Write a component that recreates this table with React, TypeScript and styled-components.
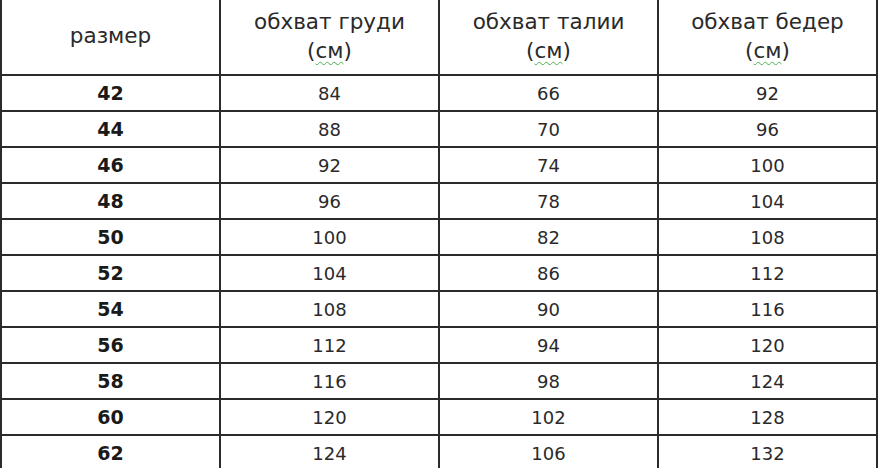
import React from 'react';
import styled, { createGlobalStyle } from 'styled-components';

const GlobalStyle = createGlobalStyle`
  html, body {
    margin: 0;
    padding: 0;
    background: #ffffff;
    overflow: hidden;
  }
  body {
    font-family: "DejaVu Sans", Verdana, sans-serif;
    color: #222;
  }
`;

const Table = styled.table`
  width: 878px;
  border-collapse: collapse;
  table-layout: fixed;
  margin-top: -1px;
`;

const HeadCell = styled.th`
  height: 73px;
  padding: 0 0 2px;
  border: 2px solid #2b2b2b;
  border-top: none;
  font-weight: normal;
  font-size: 21.5px;
  line-height: 29px;
  color: #2a2a2a;
  text-align: center;
  vertical-align: middle;
`;

const Unit = styled.span`
  text-decoration: underline wavy #4caf50;
  text-decoration-thickness: 1px;
  text-underline-offset: 3px;
`;

const Cell = styled.td<{ $bold?: boolean }>`
  height: 34px;
  padding: 0;
  border: 2px solid #2b2b2b;
  font-size: ${p => (p.$bold ? '19px' : '18px')};
  font-weight: ${p => (p.$bold ? 'bold' : 'normal')};
  color: ${p => (p.$bold ? '#1a1a1a' : '#2a2a2a')};
  text-align: center;
  vertical-align: middle;
`;

const rows = [
  [42, 84, 66, 92],
  [44, 88, 70, 96],
  [46, 92, 74, 100],
  [48, 96, 78, 104],
  [50, 100, 82, 108],
  [52, 104, 86, 112],
  [54, 108, 90, 116],
  [56, 112, 94, 120],
  [58, 116, 98, 124],
  [60, 120, 102, 128],
  [62, 124, 106, 132],
];

const Header: React.FC<{ title: string }> = ({ title }) => (
  <HeadCell>
    {title}
    <br />(<Unit>см</Unit>)
  </HeadCell>
);

export default function App() {
  return (
    <>
      <GlobalStyle />
      <Table>
        <thead>
          <tr>
            <HeadCell>размер</HeadCell>
            <Header title="обхват груди" />
            <Header title="обхват талии" />
            <Header title="обхват бедер" />
          </tr>
        </thead>
        <tbody>
          {rows.map(r => (
            <tr key={r[0]}>
              <Cell $bold>{r[0]}</Cell>
              <Cell>{r[1]}</Cell>
              <Cell>{r[2]}</Cell>
              <Cell>{r[3]}</Cell>
            </tr>
          ))}
        </tbody>
      </Table>
    </>
  );
}
